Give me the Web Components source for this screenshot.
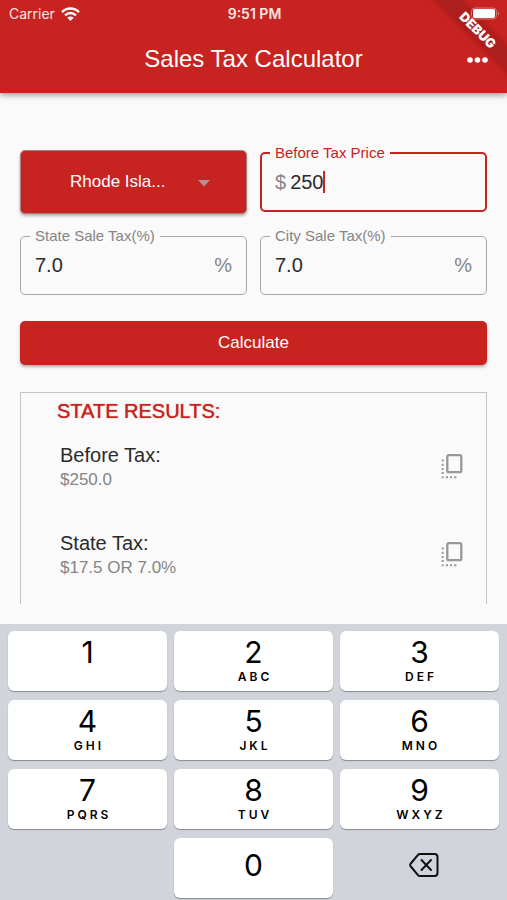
<!DOCTYPE html>
<html lang="en">
<head>
<meta charset="utf-8">
<meta name="viewport" content="width=device-width, initial-scale=1">
<title>Sales Tax Calculator</title>
<style>
  html, body { height: 100%; margin: 0; }
  body {
    --red: #c72320;
    --ink: #2b2b2b;
    --grey: #858585;
    background: #fafafa;
    color: var(--ink);
    font-family: "Liberation Sans", Arial, sans-serif;
  }
</style>
</head>
<body>
<tax-app></tax-app>

<script>
const define = (name, html, setup) => {
  const template = document.createElement('template');
  template.innerHTML = html;
  customElements.define(name, class extends HTMLElement {
    connectedCallback() {
      if (this.shadowRoot) return;
      const root = this.attachShadow({ mode: 'open' });
      root.append(template.content.cloneNode(true));
      if (setup) setup(this, root);
    }
  });
};

define('status-bar', `
<style>
  :host { display: grid; grid-template-columns: 1fr auto 1fr; align-items: center; height: 28px; padding: 0 7px 0 9px;
    font: 500 14px/16px Inter, "Liberation Sans", sans-serif; color: #fbe3e2; }
  .left { display: flex; align-items: center; gap: 6px; font-weight: 400; }
  .time { font-weight: 600; }
  .battery { justify-self: end; position: relative; z-index: 2; }
  svg { display: block; }
</style>
<div class="left"><span>Carrier</span>
  <svg width="19" height="14" viewBox="0 0 19 14" fill="none" stroke="#fff" stroke-width="2.4" aria-label="Wi-Fi">
    <path d="M1 5.2C5.8.3 13.2.3 18 5.2M4.1 8.3c3.1-3 7.7-3 10.8 0"/>
    <path d="M9.5 14 6.3 10.8c1.8-1.7 4.6-1.7 6.4 0z" fill="#fff" stroke="none"/>
  </svg>
</div>
<span class="time">9:51 PM</span>
<svg class="battery" width="29" height="14" viewBox="0 0 29 14" aria-label="Battery full">
  <rect x=".5" y="1" width="25" height="11" rx="3.5" fill="none" stroke="#d97a78"/>
  <rect x="2" y="2" width="22" height="9" rx="2" fill="#fff"/>
  <path d="M27 4.500c1.700.7 1.700 3.300 0 4z" fill="#d97a78"/>
</svg>`);

define('debug-ribbon', `
<style>
  :host { display: block; position: absolute; top: 0; right: 0; width: 90px; height: 90px; overflow: hidden; pointer-events: none; z-index: 1; }
  span { position: absolute; top: 22px; right: -41px; width: 140px; height: 16px; transform: rotate(45deg);
    background: #ac1f1f; box-shadow: 0 0 7px rgba(90, 0, 0, .4); color: #fff; text-align: center;
    font: 900 13px/16px Inter, "Liberation Sans", sans-serif; }
</style>
<span>DEBUG</span>`);

define('app-header', `
<style>
  :host { display: block; position: relative; z-index: 1; flex: none; background: var(--red); color: #fff;
    box-shadow: 0 2px 6px rgba(0, 0, 0, .4); }
  .bar { display: grid; grid-template-columns: 1fr auto 1fr; align-items: center; height: 65px; padding: 0 16px; box-sizing: border-box; }
  h1 { grid-column: 2; margin: 0 0 4px; font: 400 24px/28px "Liberation Sans", sans-serif; }
  button { justify-self: end; margin: 0 0 2px; padding: 4px 0; border: 0; background: none; color: inherit; }
  svg { display: block; }
</style>
<status-bar></status-bar>
<div class="bar">
  <h1><slot></slot></h1>
  <button type="button" aria-label="More options">
    <svg width="26" height="8" viewBox="0 0 26 8" fill="currentColor"><circle cx="5" cy="4" r="2.800"/><circle cx="12.500" cy="4" r="2.800"/><circle cx="20" cy="4" r="2.800"/></svg>
  </button>
</div>
<debug-ribbon></debug-ribbon>`);

define('state-picker', `
<style>
  :host { display: block; position: relative; margin-top: 5px; }
  select { display: block; width: 100%; height: 64px; padding: 0 60px 0 49px; border: 1px solid #a9807f; border-radius: 5px;
    appearance: none; background: var(--red); color: #fff; font: 17px/20px "Liberation Sans", sans-serif;
    box-shadow: 0 2px 3px rgba(0, 0, 0, .3); }
  svg { position: absolute; right: 37px; top: 30px; pointer-events: none; }
</style>
<select aria-label="State"><option>Rhode Isla...</option></select>
<svg width="12" height="7" viewBox="0 0 12 7"><path d="M0 0h12L6 6.500z" fill="#b09090"/></svg>`);

define('text-field', `
<style>
  :host { display: block; }
  fieldset { box-sizing: border-box; height: 67px; min-width: 0; margin: 0; padding: 0 14px; border: 1px solid #a6a6a6; border-radius: 5px; color: var(--grey); }
  legend { margin-left: -5px; padding: 0 5px; font-size: 15px; line-height: 16px; }
  .row { display: flex; align-items: center; height: 42px; font-size: 20px; line-height: 24px; }
  input { flex: 1; min-width: 0; padding: 0; border: 0; outline: 0; background: none; font: inherit; color: var(--ink); }
  .prefix { margin-right: 4px; }
  .prefix:empty { display: none; }
  .caret { display: none; width: 2px; height: 22px; background: var(--red); }
  :host([active]) fieldset { border: 2px solid var(--red); padding: 0 13px; }
  :host([active]) legend { color: var(--red); }
  :host([active]) input { flex: none; caret-color: transparent; }
  :host([active]) .caret { display: block; }
</style>
<fieldset>
  <legend><label for="value"></label></legend>
  <div class="row"><span class="prefix"></span><input id="value" inputmode="decimal"><span class="caret"></span><span class="suffix"></span></div>
</fieldset>`, (host, root) => {
  const input = root.querySelector('input');
  root.querySelector('label').textContent = host.getAttribute('label');
  root.querySelector('.prefix').textContent = host.getAttribute('prefix') || '';
  root.querySelector('.suffix').textContent = host.getAttribute('suffix') || '';
  input.value = host.getAttribute('value');
  if (host.hasAttribute('active')) {
    const fit = () => { input.style.width = input.value.length + 'ch'; };
    input.addEventListener('input', fit);
    fit();
  }
});

define('primary-button', `
<style>
  :host { display: block; }
  button { display: block; width: 100%; height: 44px; border: 0; border-radius: 5px; background: var(--red); color: #fff;
    font: 17px/20px "Liberation Sans", sans-serif; box-shadow: 0 2px 3px rgba(0, 0, 0, .3); }
</style>
<button type="button"><slot></slot></button>`);

define('result-row', `
<style>
  :host { display: flex; align-items: center; justify-content: space-between; height: 88px; padding: 0 20px 0 39px; }
  .name { font-size: 20px; line-height: 26px; }
  .value { font-size: 17px; line-height: 24px; color: var(--grey); }
  button { padding: 0; border: 0; background: none; }
  svg { display: block; }
</style>
<div><div class="name"><slot></slot></div><div class="value"><slot name="value"></slot></div></div>
<button type="button" aria-label="Copy">
  <svg width="28" height="28" viewBox="0 0 28 28" fill="none" stroke="#989898">
    <rect x="9.300" y="2.200" width="14" height="17" rx="1.500" stroke-width="2.300"/>
    <path d="M4.700 6.500v19" stroke-width="2" stroke-dasharray="2 2.200"/>
    <path d="M7.800 24.300h11" stroke-width="2" stroke-dasharray="2.200 2"/>
  </svg>
</button>`);

define('results-card', `
<style>
  :host { display: block; flex: 1; min-height: 0; overflow: hidden; border: 1px solid #c4c4c4; border-bottom: 0; }
  h2 { margin: 6px 0 0 36px; font: 400 20px/24px "Liberation Sans", sans-serif; color: var(--red); text-shadow: 0 0 1px var(--red); }
</style>
<h2><slot name="title"></slot></h2>
<slot></slot>`);

define('number-key', `
<style>
  :host { display: block; }
  button { display: flex; flex-direction: column; align-items: center; width: 100%; height: 60px; padding: 5px 0 0; border: 0;
    border-radius: 6px; background: #fff; color: #000; box-shadow: 0 1px 1px #898b90; font-family: Inter, "Liberation Sans", sans-serif; }
  .digit { font-size: 30px; line-height: 32px; }
  .letters { font-size: 12px; line-height: 18px; font-weight: 600; letter-spacing: 3px; padding-left: 3px; }
  :host(:not([letters])) .letters { display: none; }
  :host([centred]) button { justify-content: center; padding: 0 0 6px; }
</style>
<button type="button"><span class="digit"></span><span class="letters"></span></button>`, (host, root) => {
  root.querySelector('.digit').textContent = host.getAttribute('digit');
  root.querySelector('.letters').textContent = host.getAttribute('letters') || '';
});

define('delete-key', `
<style>
  :host { display: block; }
  button { display: grid; place-items: center; width: 100%; height: 60px; padding: 0 0 6px 8px; border: 0; background: none; }
</style>
<button type="button" aria-label="Delete">
  <svg width="30" height="26" viewBox="0 0 30 26" fill="none" stroke="#111" stroke-width="2" stroke-linecap="round" stroke-linejoin="round">
    <path d="M11 2h14.500a3 3 0 0 1 3 3v16a3 3 0 0 1-3 3H11a3 3 0 0 1-2-.8L1.800 14.500a2 2 0 0 1 0-3L9 2.800a3 3 0 0 1 2-.8z"/>
    <path d="m12.500 8 9.500 10m0-10-9.500 10"/>
  </svg>
</button>`);

define('number-pad', `
<style>
  :host { display: grid; grid-template-columns: repeat(3, minmax(0, 1fr)); gap: 9px 7px; flex: none; padding: 7px 8px 2px; background: #d1d4da; }
  number-key[digit="0"] { grid-column: 2; }
</style>
<number-key digit="1"></number-key>
<number-key digit="2" letters="ABC"></number-key>
<number-key digit="3" letters="DEF"></number-key>
<number-key digit="4" letters="GHI"></number-key>
<number-key digit="5" letters="JKL"></number-key>
<number-key digit="6" letters="MNO"></number-key>
<number-key digit="7" letters="PQRS"></number-key>
<number-key digit="8" letters="TUV"></number-key>
<number-key digit="9" letters="WXYZ"></number-key>
<number-key digit="0" centred></number-key>
<delete-key></delete-key>`);

define('tax-app', `
<style>
  :host { display: flex; flex-direction: column; height: 100vh; }
  main { display: flex; flex-direction: column; flex: 1; min-height: 0; padding: 52px 20px 20px; }
  form { display: grid; grid-template-columns: repeat(2, minmax(0, 1fr)); gap: 14px 13px; }
  primary-button { grid-column: 1 / -1; margin-top: 12px; }
  results-card { margin-top: 27px; }
</style>
<app-header>Sales Tax Calculator</app-header>
<main>
  <form>
    <state-picker></state-picker>
    <text-field active label="Before Tax Price" prefix="$" value="250"></text-field>
    <text-field label="State Sale Tax(%)" value="7.0" suffix="%"></text-field>
    <text-field label="City Sale Tax(%)" value="7.0" suffix="%"></text-field>
    <primary-button>Calculate</primary-button>
  </form>
  <results-card>
    <span slot="title">STATE RESULTS:</span>
    <result-row>Before Tax:<span slot="value">$250.0</span></result-row>
    <result-row>State Tax:<span slot="value">$17.5 OR 7.0%</span></result-row>
  </results-card>
</main>
<number-pad></number-pad>`);
</script>
</body>
</html>
